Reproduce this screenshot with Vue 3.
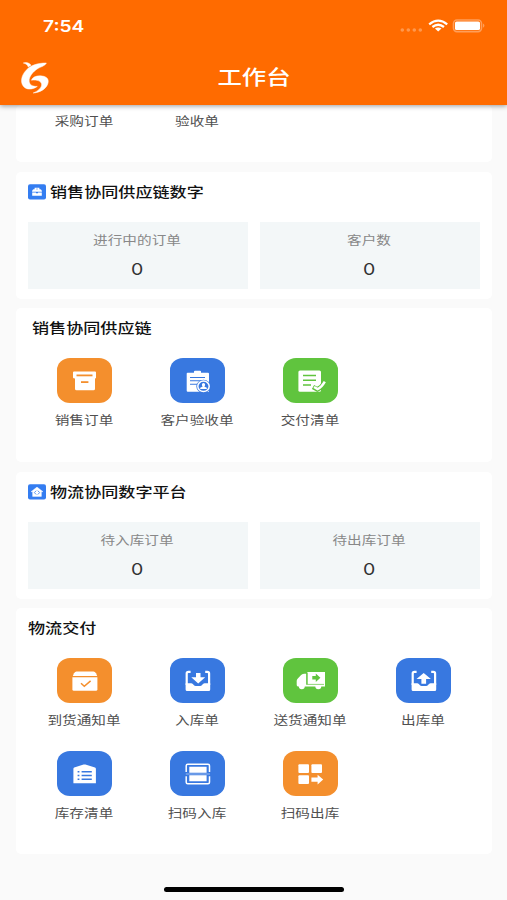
<template>
  <div class="screen">
    <header class="header">
      <div class="status-bar">
        <span class="time">7:54</span>
        <svg class="status-icons" width="90" height="16" viewBox="0 0 90 16">
          <g fill="#fff" opacity="0.3">
            <circle cx="4.3" cy="12" r="1.8" />
            <circle cx="10.3" cy="12" r="1.8" />
            <circle cx="16.3" cy="12" r="1.8" />
            <circle cx="22.3" cy="12" r="1.8" />
          </g>
          <g fill="none" stroke="#fff" stroke-width="2.3">
            <path d="M31.2 6.3Q40.2 -1 49.2 6.3" />
            <path d="M34.4 9Q40.2 4.4 46 9" />
          </g>
          <path d="M36.9 10.6Q40.2 8.3 43.5 10.6L40.2 13.6Z" fill="#fff" />
          <rect x="55.5" y="2" width="28" height="11.6" rx="3.5" fill="none" stroke="#fff" stroke-width="1.6" opacity="0.35" />
          <rect x="57" y="3.5" width="25" height="8.6" rx="1.6" fill="#fff" />
          <path d="M85.3 5.5Q87.3 7.5 85.3 9.8Z" fill="#fff" opacity="0.5" />
        </svg>
      </div>
      <div class="nav-bar">
        <svg class="logo" width="30" height="33" viewBox="0 0 30 33" fill="#fff" stroke="#fff" stroke-width="0.5">
          <path d="M3.3 2C6 .8 9.5 1.8 11 4.2L8.3 6C7.5 4 6 2.5 3.3 2Z" />
          <path d="M26.4 2C17 2 10.5 4.5 6.2 9.2C1.2 14.5 .2 21 3.3 25.2C6.5 29.2 12.5 28.8 17.3 25.4C12.4 25.6 9.6 23.8 9.2 20.5C8.6 15.8 13 10.4 18 7.4C20.8 5.8 25 5 26.4 2Z" />
          <path d="M11.4 19.2C12.8 15.8 17 14.4 22 15C27.6 15.6 29.4 19.2 27.6 23.4C25.6 28 20 31.6 13.2 32C18 30 21.8 26.8 21.6 23.4C21.4 20 17 18.6 11.4 19.2Z" />
        </svg>
        <h1 class="title"><span class="text">工作台</span></h1>
      </div>
    </header>

    <main class="content">
      <section class="card card-top">
        <div class="grid">
          <div class="label"><span class="text">采购订单</span></div>
          <div class="label"><span class="text">验收单</span></div>
        </div>
      </section>

      <template v-for="block in blocks" :key="block.title">
        <section class="card card-stats">
          <div class="card-title">
            <svg class="badge" width="18" height="16" viewBox="0 0 18 16">
              <rect y="0.3" width="18" height="15.2" rx="2" fill="#347df1" />
              <template v-if="block.icon === 'case'">
                <path d="M6.6 5.2V3.8H11.4V5.2H12.4Q13.8 5.6 14 7.8H4Q4.2 5.6 5.6 5.2ZM8 5.2H10V4.7H8Z" fill="#fff" />
                <path d="M4.2 8.4H8V9.2H10V8.4H13.8V11.8H4.2Z" fill="#fff" />
              </template>
              <template v-else>
                <path d="M9 3.1L15 7.7H13.4V12.4H4.6V7.7H3Z" fill="#fff" stroke="#fff" stroke-width="0.4" stroke-linejoin="round" />
                <path d="M8.2 6.7L6.4 8.6L8.2 10.5M9.8 6.7L11.6 8.6L9.8 10.5" fill="none" stroke="#347df1" stroke-width="0.8" />
              </template>
            </svg>
            <span class="text">{{ block.title }}</span>
          </div>
          <div class="stats">
            <div v-for="name in block.stats" :key="name" class="stat">
              <div class="stat-name"><span class="text">{{ name }}</span></div>
              <div class="stat-value"><span class="text">0</span></div>
            </div>
          </div>
        </section>

        <section :class="['card', block.menuClass]">
          <div class="menu-title"><span class="text">{{ block.menuTitle }}</span></div>
          <div class="grid">
            <div v-for="item in block.items" :key="item.name" class="item">
              <div :class="['tile', item.color]">
                <svg width="55" height="45" viewBox="0 0 55 45">
                  <path
                    v-for="(p, i) in icons[item.icon]"
                    :key="i"
                    :class="p.type"
                    :stroke-width="p.w"
                    :d="p.d"
                  />
                </svg>
              </div>
              <div class="label"><span class="text">{{ item.name }}</span></div>
            </div>
          </div>
        </section>
      </template>
    </main>

    <div class="home-indicator"></div>
  </div>
</template>

<script setup>
const blocks = [
  {
    title: '销售协同供应链数字',
    icon: 'case',
    stats: ['进行中的订单', '客户数'],
    menuTitle: '销售协同供应链',
    menuClass: 'card-sales',
    items: [
      { name: '销售订单', icon: 'box', color: 'orange' },
      { name: '客户验收单', icon: 'clipboard', color: 'blue' },
      { name: '交付清单', icon: 'checklist', color: 'green' },
    ],
  },
  {
    title: '物流协同数字平台',
    icon: 'house',
    stats: ['待入库订单', '待出库订单'],
    menuTitle: '物流交付',
    menuClass: 'card-logistics',
    items: [
      { name: '到货通知单', icon: 'arrival', color: 'orange' },
      { name: '入库单', icon: 'inbound', color: 'blue' },
      { name: '送货通知单', icon: 'truck', color: 'green' },
      { name: '出库单', icon: 'outbound', color: 'blue' },
      { name: '库存清单', icon: 'warehouse', color: 'blue' },
      { name: '扫码入库', icon: 'scan', color: 'blue' },
      { name: '扫码出库', icon: 'blocks', color: 'orange' },
    ],
  },
]

const tray = [
  { type: 'line', w: 2.2, d: 'M20.6 13.8H18.4Q16.7 13.8 16.7 15.5V27M35.2 13.8H37.4Q39.1 13.8 39.1 15.5V27' },
  { type: 'fill', d: 'M15.6 25.3H21.3Q22.8 25.4 23.3 26.6Q24 28 25.5 28H30.3Q31.8 28 32.5 26.6Q33 25.4 34.5 25.3H40.2V31.5Q40.2 33 38.7 33H17.1Q15.6 33 15.6 31.5Z' },
]

// fill / line are white, cut / cutline take the tile colour
const icons = {
  box: [
    { type: 'fill', d: 'M17 13.6H38Q39 13.6 39 14.6V19.8Q39 20.6 38 20.6V30.7Q38 32.2 36.5 32.2H19.5Q18 32.2 18 30.7V20.6Q16 20.6 16 19.6V14.6Q16 13.6 17 13.6Z' },
    { type: 'cutline', w: 1.8, d: 'M19.5 17.4H35.5' },
    { type: 'cutline', w: 1.8, d: 'M24 24.1H31.4' },
  ],
  clipboard: [
    { type: 'fill', d: 'M17.6 14.7H24V13.6Q24 12.8 25 12.8H30Q31 12.8 31 13.6V14.7H38Q39 14.7 39 15.7V33.7H17.8Q16.7 33.7 16.7 32.7V15.7Q16.7 14.7 17.6 14.7Z' },
    { type: 'cutline', w: 1.1, d: 'M20 19.5H35M20 22.8H34M20 26.2H27' },
    { type: 'cut', d: 'M26.3 28.3a7.2 6.6 0 1 0 14.4 0a7.2 6.6 0 1 0 -14.4 0Z' },
    { type: 'line', w: 1.5, d: 'M27.8 28.3a5.7 5.2 0 1 0 11.4 0a5.7 5.2 0 1 0 -11.4 0Z' },
    { type: 'fill', d: 'M31.9 26.6a1.6 1.6 0 1 1 3.2 0Q35.1 28 34.3 28.5L36.8 29.8V31H30.2V29.8L32.7 28.5Q31.9 28 31.9 26.6Z' },
  ],
  checklist: [
    { type: 'fill', d: 'M17 12.4H36.4Q38 12.4 38 14V32.2Q38 33.8 36.4 33.8H17Q15.4 33.8 15.4 32.2V14Q15.4 12.4 17 12.4Z' },
    { type: 'cutline', w: 1.5, d: 'M20 17.4H33M20 22.2H33M20 27H28' },
    { type: 'cutline', w: 4.6, d: 'M30 29L34.4 31.4Q38.5 29.6 41 25' },
    { type: 'line', w: 2.5, d: 'M31 29L34.6 31.1Q38.5 29.3 41.8 23.6' },
  ],
  arrival: [
    { type: 'fill', d: 'M19.5 13.4H36.5Q38 13.4 39 15.2L40.2 18H15.8L17 15.2Q18 13.4 19.5 13.4Z' },
    { type: 'fill', d: 'M15.4 19.2H40.4V31.2Q40.4 32.7 38.9 32.7H16.9Q15.4 32.7 15.4 31.2Z' },
    { type: 'cutline', w: 1.5, d: 'M24 25.2L27.3 28.3L33.6 22.9' },
  ],
  inbound: [
    ...tray,
    { type: 'fill', d: 'M26 15H30.5V19.2H35.2L28.2 25.4L21.3 19.2H26Z' },
  ],
  outbound: [
    ...tray,
    { type: 'fill', d: 'M27.7 15L34.9 21.1H30.1V25.8H25.4V21.1H20.5Z' },
  ],
  truck: [
    { type: 'fill', d: 'M24.4 14H42V27.3H24.4Z' },
    { type: 'fill', d: 'M23.2 15.7H21Q19 15.7 17.6 17.6L14.4 21Q13.7 22 13.7 23V27Q13.7 28.4 15 28.4H42V26.8H23.2Z' },
    { type: 'fill', d: 'M15.8 28a3 3.2 0 1 0 6 0ZM32.3 28a3 3.2 0 1 0 6 0Z' },
    { type: 'cutline', w: 0.7, d: 'M24.2 15V26.4H41' },
    { type: 'cut', d: 'M29.3 18H32.8V15.6L37.4 19.8L32.8 24V21.6H29.3Z' },
  ],
  warehouse: [
    { type: 'fill', d: 'M17.2 16.6L26.6 13.6Q27.5 13.3 28.4 13.6L38 16.6Q38.9 17 38.9 18V32.3H16.4V18Q16.4 17 17.2 16.6Z' },
    { type: 'cutline', w: 1.5, d: 'M20.6 20.8H22.4M24.6 20.8H34.8M20.6 24.5H22.4M24.6 24.5H34.8M20.6 28.2H22.4M24.6 28.2H34.8' },
  ],
  scan: [
    { type: 'line', w: 1.5, d: 'M16.2 21V14.8Q16.2 13.3 17.7 13.3H38Q39.5 13.3 39.5 14.8V21M16.2 25.2V31.2Q16.2 32.7 17.7 32.7H38Q39.5 32.7 39.5 31.2V25.2' },
    { type: 'fill', d: 'M19.3 15.8H36.6V21.8H19.3ZM19.3 24.2H36.6V30.2H19.3Z' },
    { type: 'line', w: 0.5, d: 'M15.8 23H40' },
  ],
  blocks: [
    { type: 'fill', d: 'M16.4 13.3H25Q26 13.3 26 14.3V21Q26 22 25 22H16.4Q15.4 22 15.4 21V14.3Q15.4 13.3 16.4 13.3Z' },
    { type: 'fill', d: 'M29.4 13.3H38Q39 13.3 39 14.3V21Q39 22 38 22H29.4Q28.4 22 28.4 21V14.3Q28.4 13.3 29.4 13.3Z' },
    { type: 'fill', d: 'M16.4 24.2H25Q26 24.2 26 25.2V31.9Q26 32.9 25 32.9H16.4Q15.4 32.9 15.4 31.9V25.2Q15.4 24.2 16.4 24.2Z' },
    { type: 'fill', d: 'M28.4 26.4H34.6V23.8L40.2 28.6L34.6 33.4V30.8H28.4Z' },
  ],
}
</script>

<style>
body {
  background: #fafafa;
}
</style>

<style scoped>
.screen {
  display: flex;
  flex-direction: column;
  align-items: center;
  width: 507px;
  height: 900px;
  overflow: hidden;
  background: #fafafa;
  font-family: Inter, "Noto Sans CJK SC", sans-serif;
  color: #333;
}

/* wide letterforms */
.text {
  display: inline-block;
  transform: scaleX(1.22);
  white-space: nowrap;
}

.header {
  flex: none;
  width: 100%;
  height: 105px;
  background: #ff6b00;
  box-shadow: 0 1px 5px rgba(0, 0, 0, 0.4);
  color: #fff;
  z-index: 1;
}

.status-bar {
  display: flex;
  align-items: center;
  justify-content: space-between;
  box-sizing: border-box;
  height: 50px;
  padding: 2px 19px 0 43px;
}

.time {
  font-size: 16px;
  font-weight: 600;
  transform: scaleX(1.2);
  transform-origin: left;
}

.nav-bar {
  display: grid;
  grid-template-columns: 60px 1fr 60px;
  align-items: center;
  height: 55px;
}

.logo {
  margin-left: 20px;
}

.title {
  margin: 0;
  text-align: center;
  font-size: 20px;
  line-height: 30px;
  font-weight: 500;
}

.content {
  display: flex;
  flex-direction: column;
  gap: 10px;
  width: 476px;
}

.card {
  box-sizing: border-box;
  padding: 0 12px;
  border-radius: 5px;
  background: #fff;
}

.card-top {
  height: 57px;
  padding-top: 7px;
}

.card-stats {
  height: 127px;
}

.card-sales {
  height: 154px;
  margin-top: -1px;
}

.card-sales .menu-title {
  padding-left: 4px;
}

.card-logistics {
  height: 246px;
  margin-top: -1px;
}

.card-title {
  display: flex;
  align-items: center;
  height: 39px;
  margin-bottom: 11px;
  font-size: 14px;
  line-height: 21px;
  font-weight: 500;
  color: #111;
}

.card-title .text,
.menu-title .text {
  transform-origin: left;
}

.badge {
  margin-right: 4px;
}

.menu-title {
  height: 50px;
  font-size: 14px;
  line-height: 40px;
  font-weight: 500;
  color: #111;
}

.stats {
  display: grid;
  grid-template-columns: 1fr 1fr;
  gap: 12px;
}

.stat {
  box-sizing: border-box;
  height: 67px;
  padding-top: 9px;
  background: #f3f7f8;
  text-align: center;
}

.stat-name {
  font-size: 12px;
  line-height: 20px;
  color: #888;
}

.stat-value {
  font-size: 16px;
  line-height: 20px;
  margin-top: 8px;
}

.grid {
  display: grid;
  grid-template-columns: repeat(4, 113px);
  row-gap: 20px;
}

.item {
  height: 73px;
}

.tile {
  width: 55px;
  height: 45px;
  margin: 0 auto 8px;
  border-radius: 13px / 12px;
  background: var(--tile);
}

.tile svg {
  display: block;
}

.orange {
  --tile: #f48f2d;
}

.blue {
  --tile: #3878e0;
}

.green {
  --tile: #60c43e;
}

.fill {
  fill: #fff;
}

.line {
  fill: none;
  stroke: #fff;
}

.cut {
  fill: var(--tile);
}

.cutline {
  fill: none;
  stroke: var(--tile);
}

.label {
  font-size: 12px;
  line-height: 20px;
  text-align: center;
  color: #505050;
}

.home-indicator {
  flex: none;
  width: 180px;
  height: 5px;
  margin-top: 33px;
  border-radius: 3px;
  background: #000;
}
</style>
